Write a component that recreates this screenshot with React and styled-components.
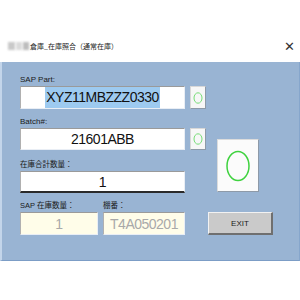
import React from "react";
import styled, { createGlobalStyle } from "styled-components";

const Global = createGlobalStyle`
  html, body {
    margin: 0;
    padding: 0;
    background: #ffffff;
  }
  body {
    width: 300px;
    height: 300px;
    overflow: hidden;
    font-family: "Liberation Sans", "Noto Sans CJK JP", sans-serif;
  }
`;

const Window = styled.div`
  padding-top: 30px;
  width: 300px;
`;

const TitleBar = styled.div`
  height: 32px;
  display: flex;
  align-items: center;
  justify-content: space-between;
  padding: 0 5px 0 8px;
  box-sizing: border-box;
  background: #ffffff;
`;

const Title = styled.div`
  display: flex;
  align-items: center;
  font-size: 7px;
  color: #222;
  font-family: "Noto Sans CJK JP", sans-serif;
`;

const Blur = styled.span`
  display: inline-block;
  width: ${(p) => p.w}px;
  height: 8px;
  margin-right: 1px;
  background: ${(p) => p.c};
  filter: blur(0.8px);
`;

const Close = styled.span`
  font-size: 13px;
  color: #333;
  font-family: "DejaVu Sans", sans-serif;
  font-weight: 300;
`;

const Panel = styled.div`
  background: #99b4d3;
  border-left: 2px solid #c3d5ea;
  border-right: 1px solid #86a6cc;
  border-bottom: 1px solid #7c9dc6;
  box-sizing: border-box;
  height: 199px;
  padding: 12px 0 0 18px;
`;

const TopGrid = styled.div`
  display: grid;
  grid-template-columns: 165px 21px 53px;
  grid-template-rows: 12px 23px 19px 22px 21px 22px;
`;

const Label = styled.div`
  font-size: ${(p) => (p.cjk ? 7.5 : 8)}px;
  line-height: 12px;
  color: #1a1a1a;
  font-family: "Liberation Sans", "Noto Sans CJK JP", sans-serif;
  align-self: end;
  white-space: nowrap;
`;

const Field = styled.div`
  box-sizing: border-box;
  display: flex;
  align-items: center;
  justify-content: center;
  background: ${(p) => (p.readOnly ? "#fffde9" : "#ffffff")};
  border-top: 1px solid #9a9a9a;
  border-left: 1px solid #b0b0b0;
  border-right: 1px solid #e9eef5;
  border-bottom: ${(p) => (p.heavy ? "2px solid #2a2a2a" : "1px solid #e9eef5")};
  font-size: 14px;
  letter-spacing: -0.5px;
  color: ${(p) => (p.readOnly ? "#a9a9a9" : "#111")};
  height: 100%;
`;

const Selected = styled.span`
  background: #9dcaf0;
  padding: 2px 1px;
  line-height: 17px;
`;

const SmallBtn = styled.div`
  justify-self: end;
  width: 16px;
  height: 100%;
  box-sizing: border-box;
  background: #f7f7f7;
  border: 1px solid #d8d8d8;
  border-right-color: #8e9aa8;
  border-bottom-color: #8e9aa8;
  display: flex;
  align-items: center;
  justify-content: center;
`;

const BigBox = styled.div`
  grid-column: 3;
  grid-row: 4 / 7;
  justify-self: end;
  align-self: end;
  width: 42px;
  height: 53px;
  margin-bottom: 1px;
  box-sizing: border-box;
  background: #fbfbfb;
  border: 1px solid #dcdcdc;
  border-right-color: #8e9aa8;
  border-bottom-color: #8e9aa8;
  display: flex;
  align-items: center;
  justify-content: center;
`;

const BottomGrid = styled.div`
  display: grid;
  grid-template-columns: 78px 82px 83px;
  column-gap: 5px;
  grid-template-rows: 19px 23px;
`;

const ExitBtn = styled.button`
  justify-self: end;
  box-sizing: border-box;
  width: 65px;
  height: 23px;
  background: #cacaca;
  border: 1px solid #f2f2f2;
  border-right: 2px solid #6f6f6f;
  border-bottom: 2px solid #6f6f6f;
  font-size: 8px;
  font-family: "Liberation Sans", sans-serif;
  color: #1a1a1a;
  padding: 0;
`;

const Ring = ({ w, h, rx, ry, sw, color }) => (
  <svg width={w} height={h} viewBox={`0 0 ${w} ${h}`}>
    <ellipse cx={w / 2} cy={h / 2} rx={rx} ry={ry} fill="none" stroke={color} strokeWidth={sw} />
  </svg>
);

export default function App() {
  return (
    <>
      <Global />
      <Window>
        <TitleBar>
          <Title>
            <Blur w={7} c="#c9c9c9" />
            <Blur w={6} c="#dadada" />
            <Blur w={6} c="#bdbdbd" />
            <span>倉庫_在庫照合（通常在庫）</span>
          </Title>
          <Close>✕</Close>
        </TitleBar>
        <Panel>
          <TopGrid>
            <Label>SAP Part:</Label>
            <span />
            <span />
            <Field>
              <Selected>XYZ11MBZZZ0330</Selected>
            </Field>
            <SmallBtn>
              <Ring w={12} h={14} rx={4} ry={5.2} sw={1} color="#77dd77" />
            </SmallBtn>
            <span />
            <Label>Batch#:</Label>
            <span />
            <span />
            <Field>21601ABB</Field>
            <SmallBtn>
              <Ring w={12} h={14} rx={4} ry={5.2} sw={1} color="#77dd77" />
            </SmallBtn>
            <BigBox>
              <Ring w={26} h={34} rx={11} ry={14.5} sw={1.5} color="#3fd23f" />
            </BigBox>
            <Label cjk>在庫合計数量：</Label>
            <span />
            <Field heavy>1</Field>
          </TopGrid>
          <BottomGrid>
            <Label cjk>SAP 在庫数量：</Label>
            <Label cjk>棚番：</Label>
            <span />
            <Field readOnly>1</Field>
            <Field readOnly>T4A050201</Field>
            <ExitBtn>EXIT</ExitBtn>
          </BottomGrid>
        </Panel>
      </Window>
    </>
  );
}
